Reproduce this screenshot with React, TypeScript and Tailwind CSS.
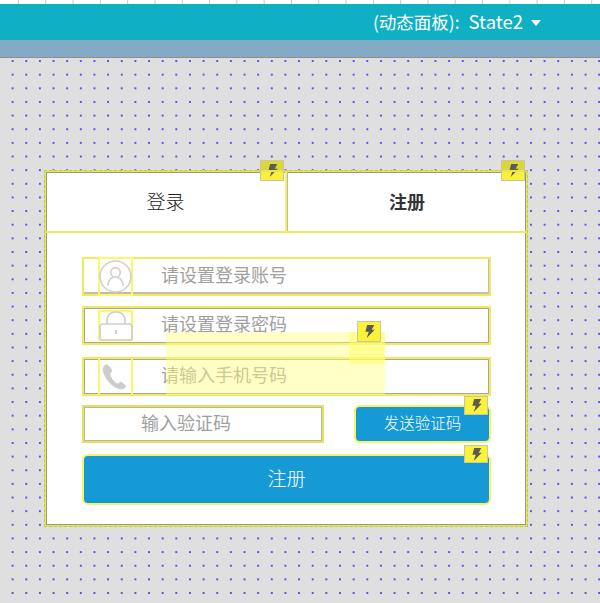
import React from "react";

const BoltIcon = () => (
  <svg viewBox="0 0 16 16" className="w-[15px] h-[15px] shrink-0">
    <path d="M5.5 1 H13 L10.4 6 H13.6 L5 15 L7.2 8.2 H3.6 Z" fill="#5c5c50" />
  </svg>
);

// the little action badge that sits over the corner of a widget
const Badge = ({ className, children }: { className: string; children?: React.ReactNode }) => (
  <div className={"absolute flex items-center justify-center w-[24px] border border-[#c9c6a0] " + className}>
    <BoltIcon />
    {children}
  </div>
);

const IconBox = ({ children, className }: { children: React.ReactNode; className: string }) => (
  <div className={"w-[35px] ml-[14px] flex items-center justify-center border-2 border-[#fdf76a] shrink-0 " + className}>
    {children}
  </div>
);

const UserIcon = () => (
  <svg viewBox="0 0 32 32" className="w-[33px] h-[33px] shrink-0" fill="none" stroke="#cfcfcf" strokeWidth="1.5">
    <circle cx="16" cy="16" r="15" />
    <circle cx="16" cy="12" r="4.6" />
    <path d="M8.5 25 C9 20 11.5 17.6 14 16.8 M23.5 25 C23 20 20.5 17.6 18 16.8" />
  </svg>
);

const LockIcon = () => (
  <svg viewBox="0 0 34 30" className="w-[34px] h-[30px] shrink-0" fill="none" stroke="#cfcfcf" strokeWidth="1.7">
    <rect x="1" y="13" width="32" height="16" rx="2.5" />
    <path d="M8 13 V9.5 C8 4 12 1 17 1 C22 1 26 4 26 9.5 V13" />
    <path d="M17 19 V23" strokeWidth="2" />
  </svg>
);

const PhoneIcon = () => (
  <svg viewBox="0 0 28 30" className="w-[26px] h-[28px] shrink-0 -ml-[4px]">
    <path
      d="M5.5 1.5 C3 2.5 1.5 5 2 8.5 C3.5 16 11 25.5 19.5 28 C23 29 26 27.5 27 25 C27 24 23 20.5 21.5 20 C20 20 19 22 17.5 22 C14 20.5 10.5 15 10 12 C10 10.5 12 9.5 12 8 C12 6.5 8 1.5 5.5 1.5 Z"
      fill="#cccccc"
    />
  </svg>
);

const Field = ({ icon, text, className, boxClass }: { icon: React.ReactNode; text: string; className: string; boxClass: string }) => (
  <div className={"flex items-stretch h-[39px] border-2 border-[#f2ea5a] " + className}>
    <IconBox className={boxClass}>{icon}</IconBox>
    <span className="ml-[28px] text-[18px] leading-[31px] text-[#a0a0a0]">{text}</span>
  </div>
);

export default function App() {
  return (
    <div className="relative w-[600px] h-[603px] overflow-hidden flex flex-col bg-[#dfdfdf] font-['Noto_Sans_CJK_SC',sans-serif]">
      {/* ruler */}
      <div className="h-[4px] bg-white bg-[linear-gradient(90deg,#c8c8c8_1px,transparent_1px)] bg-[size:27.3px_100%] bg-[position:18px_0]" />
      <div className="h-[36px] bg-[#0fb0c4] flex items-center justify-end pr-[59px] text-white font-normal">
        <span className="text-[17.5px]">(动态面板):</span>
        <span className="ml-[9px] text-[18.5px]">State2</span>
        <span className="ml-[8px] mt-[1px] w-0 h-0 border-x-[5px] border-x-transparent border-t-[6px] border-t-white" />
      </div>
      <div className="h-[18px] bg-[#84abc5] border-b border-[#8d8d8d]" />

      {/* canvas */}
      <div className="flex-1 pt-[112px] pl-[44px] bg-[radial-gradient(circle,#5a50ea_0.7px,transparent_1.1px)] bg-[size:13.65px_13.65px] bg-[position:5.8px_-3.8px]">
        <div className="relative w-[484px] h-[357px] bg-white border-2 border-[#ece44a] outline-1 outline-dashed -outline-offset-1 outline-[#a8d070] shadow-[inset_0_0_0_1px_#9a9a80] flex flex-col">
          <div className="flex h-[61px] border-b-2 border-[#f2ea5a] shrink-0">
            <div className="w-[241px] flex items-center justify-center border-r-2 border-[#f7f06a] text-[19px] text-[#222] font-light">登录</div>
            <div className="flex-1 flex items-center justify-center border-l border-[#b9b9a0] text-[18px] font-bold text-[#333]">注册</div>
          </div>

          <div className="flex flex-col pl-[36px] pr-[35px] pt-[24px]">
            <Field icon={<UserIcon />} text="请设置登录账号" className="shadow-[inset_-1px_-2px_0_0_#bdbdb4]" boxClass="-my-[2px]" />
            <Field icon={<LockIcon />} text="请设置登录密码" className="mt-[10px] shadow-[inset_0_0_0_1px_#a8a894]" boxClass="my-[2px]" />
            <Field icon={<PhoneIcon />} text="请输入手机号码" className="mt-[12px] shadow-[inset_0_0_0_1px_#a8a8a0]" boxClass="border-y-0" />

            <div className="flex justify-between mt-[9px]">
              <div className="w-[242px] h-[38px] border-2 border-[#e6df5a] shadow-[inset_0_0_0_1px_#b8b8a4] pl-[57px] text-[18px] leading-[31px] text-[#a0a0a0]">
                输入验证码
              </div>
              <button className="w-[137px] h-[38px] pb-[2px] rounded-[6px] bg-[#169ad6] border-2 border-[#f7f06a] text-white text-[15.5px] font-light">
                发送验证码
              </button>
            </div>

            <button className="mt-[11px] h-[51px] pb-[2px] rounded-[6px] bg-[#169ad6] border-2 border-[#f7f06a] text-white text-[19px] font-light">
              注册
            </button>
          </div>

          {/* highlight of the selected widget */}
          <div className="absolute left-[120px] top-[160px] w-[219px] h-[63px] bg-[#ffff80]/45 pointer-events-none" />
          <div className="absolute left-[303px] top-[160px] w-[36px] h-[32px] bg-[#ffff66]/50 pointer-events-none" />

          <Badge className="left-[214px] -top-[12px] h-[21px] bg-[linear-gradient(#dcd63c_52%,#f8f03c_52%)]">
            <span className="absolute left-0 right-0 top-[9px] h-[2px] bg-[#ece44a]" />
          </Badge>
          <Badge className="left-[455px] -top-[12px] h-[21px] bg-[linear-gradient(#dcd63c_52%,#f8f03c_52%)]">
            <span className="absolute left-0 right-0 top-[9px] h-[2px] bg-[#ece44a]" />
          </Badge>
          <Badge className="left-[311px] top-[149px] h-[21px] bg-[#fbf23c]" />
          <Badge className="left-[418px] top-[224px] h-[19px] bg-[#fbf23c]" />
          <Badge className="left-[418px] top-[273px] h-[18px] bg-[#fbf23c]" />
        </div>
      </div>
    </div>
  );
}
